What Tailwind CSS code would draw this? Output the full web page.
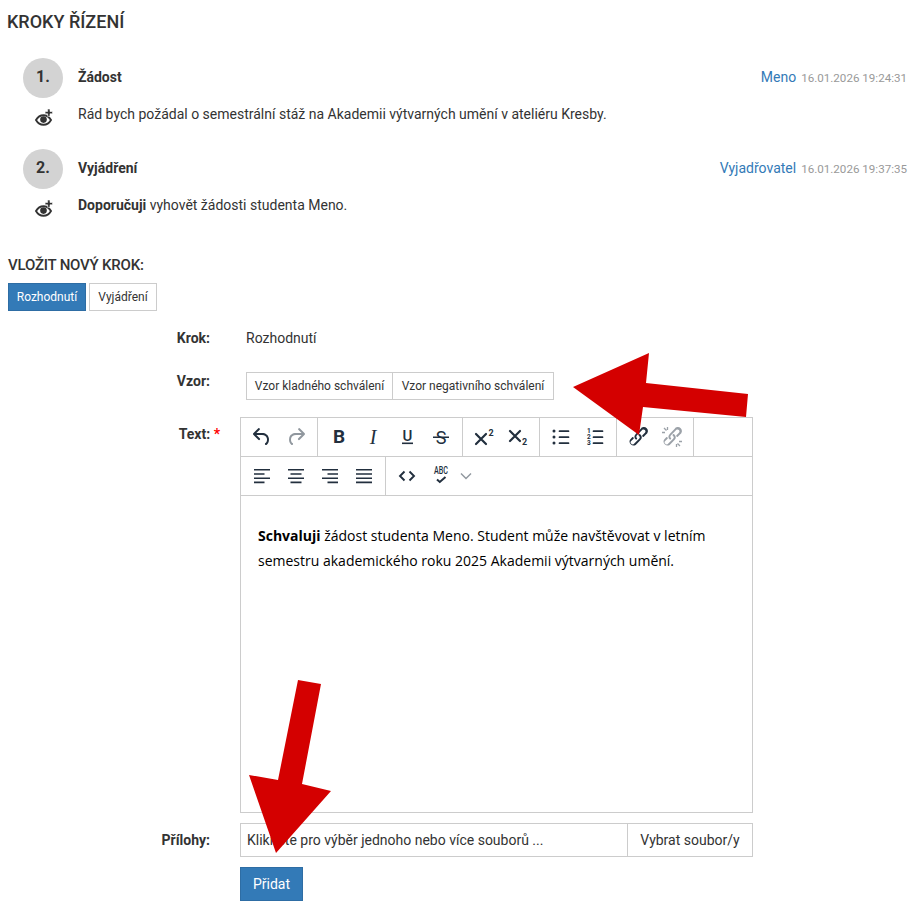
<!DOCTYPE html>
<html lang="cs"><head><meta charset="utf-8"><script src="https://cdn.jsdelivr.net/npm/@tailwindcss/browser@4"></script></head>
<body class="bg-white">
<div class="relative w-[914px] h-[914px] overflow-hidden font-['Roboto',sans-serif] text-[14px] leading-[20px] text-[#333]">
  <div class="pl-[8px] pr-[7px]">
    <h2 class="pt-[11px] -ml-[1px] h-[58px] text-[18px] leading-[22px] font-medium text-[#333]">KROKY ŘÍZENÍ</h2>

    <div class="pl-[15px] h-[91px]">
      <div class="flex items-center h-[40px] pb-[2px]">
        <div class="w-[40px] h-[40px] rounded-full bg-[#d3d3d3] flex items-center justify-center font-bold text-[16px] pb-[2px] mt-[2px]">1.</div>
        <div class="ml-[15px] font-bold">Žádost</div>
        <div class="ml-auto flex items-baseline gap-[5px]"><a class="text-[#337ab7]">Meno</a><span class="text-[11.6px] text-[#999]">16.01.2026 19:24:31</span></div>
      </div>
      <div class="flex h-[30px] pt-[6px]">
        <div class="w-[40px] flex justify-center pt-[5px]"><svg class="w-[19px] h-[17px]" viewBox="0 0 19 17"><path d="M2 11C4 7.500 6.300 6.200 9.500 6.200S15 7.500 17 11c-2 3.500-4.300 4.800-7.500 4.800S4 14.500 2 11z" fill="#fff" stroke="#333" stroke-width="1.900"/><circle cx="9.500" cy="10.600" r="3.300" fill="#333"/><path d="M13.600 0h2.400v2.500h2.500v2.300H16v2.500h-2.400V4.800h-2.500V2.500h2.500z" fill="#333" stroke="#fff" stroke-width=".6"/></svg></div>
        <p class="ml-[15px]">Rád bych požádal o semestrální stáž na Akademii výtvarných umění v ateliéru Kresby.</p>
      </div>
    </div>

    <div class="pl-[15px] h-[106px]">
      <div class="flex items-center h-[40px] pb-[2px]">
        <div class="w-[40px] h-[40px] rounded-full bg-[#d3d3d3] flex items-center justify-center font-bold text-[16px] pb-[2px] mt-[2px]">2.</div>
        <div class="ml-[15px] font-bold">Vyjádření</div>
        <div class="ml-auto flex items-baseline gap-[5px]"><a class="text-[#337ab7]">Vyjadřovatel</a><span class="text-[11.6px] text-[#999]">16.01.2026 19:37:35</span></div>
      </div>
      <div class="flex h-[30px] pt-[6px]">
        <div class="w-[40px] flex justify-center pt-[5px]"><svg class="w-[19px] h-[17px]" viewBox="0 0 19 17"><path d="M2 11C4 7.500 6.300 6.200 9.500 6.200S15 7.500 17 11c-2 3.500-4.300 4.800-7.500 4.800S4 14.500 2 11z" fill="#fff" stroke="#333" stroke-width="1.900"/><circle cx="9.500" cy="10.600" r="3.300" fill="#333"/><path d="M13.600 0h2.400v2.500h2.500v2.300H16v2.500h-2.400V4.800h-2.500V2.500h2.500z" fill="#333" stroke="#fff" stroke-width=".6"/></svg></div>
        <p class="ml-[15px]"><b>Doporučuji</b> vyhovět žádosti studenta Meno.</p>
      </div>
    </div>

    <h3 class="h-[28px] text-[15px] leading-[20px] font-medium tracking-[-0.2px]">VLOŽIT NOVÝ KROK:</h3>
    <div class="flex gap-[3px] h-[28px] text-[12px]">
      <button class="w-[78px] h-[28px] bg-[#337ab7] border border-[#2e6da4] text-white">Rozhodnutí</button>
      <button class="w-[68px] h-[28px] bg-white border border-[#ccc]">Vyjádření</button>
    </div>

    <div class="mt-[17px] flex h-[20px] items-center">
      <div class="w-[202px] text-right font-bold">Krok:</div>
      <div class="ml-[36px]">Rozhodnutí</div>
    </div>

    <div class="mt-[24px] flex h-[28px]">
      <div class="w-[202px] text-right font-bold leading-[18px]">Vzor:</div>
      <div class="ml-[36px] flex text-[12px]">
        <button class="w-[147px] h-[28px] border border-[#ccc] bg-white">Vzor kladného schválení</button>
        <button class="w-[161px] h-[28px] border border-[#ccc] border-l-0 bg-white">Vzor negativního schválení</button>
      </div>
    </div>

    <div class="mt-[17px] flex">
      <div class="w-[202px] text-right font-bold leading-[20px] pt-[7px]"><span class="relative left-[10px]">Text: <span class="text-[#f00]">*</span></span></div>
      <div class="ml-[30px] w-[513px] h-[396px] border border-[#ccc] flex flex-col">
        <div class="flex h-[39px] border-b border-[#ccc] text-[#222f3e]">
          <div class="flex w-[77px] border-r border-[#ccc] pl-[4px] items-center">
            <span class="w-[34px] flex justify-center"><svg class="w-[24px] h-[24px]" viewBox="0 0 24 24" fill="#222f3e"><path d="M6.400 8H12c3.700 0 6.200 2 6.800 5.100.6 2.700-.4 5.600-2.300 6.800a1 1 0 0 1-1-1.800c1.100-.6 1.800-2.700 1.400-4.600-.5-2.100-2.100-3.500-4.900-3.500H6.400l3.300 3.300a1 1 0 1 1-1.400 1.400l-5-5a1 1 0 0 1 0-1.400l5-5a1 1 0 0 1 1.400 1.400L6.400 8z"/></svg></span>
            <span class="w-[34px] flex justify-center"><svg class="w-[24px] h-[24px]" viewBox="0 0 24 24" fill="#222f3e" fill-opacity=".5"><path d="M17.600 8H12c-3.700 0-6.200 2-6.800 5.100-.6 2.700.4 5.600 2.300 6.800a1 1 0 0 0 1-1.800c-1.100-.6-1.800-2.700-1.400-4.600.5-2.100 2.100-3.500 4.900-3.500h5.600l-3.300 3.300a1 1 0 1 0 1.400 1.400l5-5a1 1 0 0 0 0-1.400l-5-5a1 1 0 0 0-1.400 1.400L17.600 8z"/></svg></span>
          </div>
          <div class="flex w-[145px] border-r border-[#ccc] pl-[4px] items-center">
            <span class="w-[34px] text-center font-bold text-[19px] leading-[24px]">B</span>
            <span class="w-[34px] text-center italic font-['Liberation_Serif',serif] text-[20px] leading-[24px]">I</span>
            <span class="w-[34px] flex justify-center"><svg class="w-[24px] h-[24px]" viewBox="0 0 24 24" fill="#222f3e"><text x="12.500" y="15.500" text-anchor="middle" font-size="15" font-weight="500" font-family="Roboto">U</text><rect x="7" y="17.500" width="11" height="1.600"/></svg></span>
            <span class="w-[34px] flex justify-center"><svg class="w-[24px] h-[24px]" viewBox="0 0 24 24" fill="#222f3e"><text x="12" y="18.500" text-anchor="middle" font-size="18" font-family="Roboto">S</text><rect x="4" y="11.500" width="16" height="1.500"/></svg></span>
          </div>
          <div class="flex w-[77px] border-r border-[#ccc] pl-[4px] items-center">
            <span class="w-[34px] flex justify-center"><svg class="w-[24px] h-[24px]" viewBox="0 0 24 24" fill="#222f3e"><path d="M4 9l10 10M14 9L4 19" stroke="#222f3e" stroke-width="2.200" stroke-linecap="round" fill="none"/><text x="16.500" y="11" font-size="9" font-weight="700" font-family="Roboto">2</text></svg></span>
            <span class="w-[34px] flex justify-center"><svg class="w-[24px] h-[24px]" viewBox="0 0 24 24" fill="#222f3e"><path d="M4 6l10 10M14 6L4 16" stroke="#222f3e" stroke-width="2.200" stroke-linecap="round" fill="none"/><text x="16" y="19.500" font-size="9" font-weight="700" font-family="Roboto">2</text></svg></span>
          </div>
          <div class="flex w-[77px] border-r border-[#ccc] pl-[4px] items-center">
            <span class="w-[34px] flex justify-center"><svg class="w-[24px] h-[24px]" viewBox="0 0 24 24" fill="#222f3e"><path d="M10.500 5.300h9a.8.800 0 0 1 0 1.700h-9a.8.800 0 0 1 0-1.700zm0 6h9a.8.800 0 0 1 0 1.700h-9a.8.800 0 0 1 0-1.700zm0 6h9a.8.800 0 0 1 0 1.700h-9a.8.800 0 0 1 0-1.700z"/><circle cx="5" cy="6" r="1.500"/><circle cx="5" cy="12" r="1.500"/><circle cx="5" cy="18" r="1.500"/></svg></span>
            <span class="w-[34px] flex justify-center"><svg class="w-[24px] h-[24px]" viewBox="0 0 24 24" fill="#222f3e"><path d="M10.500 5.300h9a.8.800 0 0 1 0 1.700h-9a.8.800 0 0 1 0-1.700zm0 6h9a.8.800 0 0 1 0 1.700h-9a.8.800 0 0 1 0-1.700zm0 6h9a.8.800 0 0 1 0 1.700h-9a.8.800 0 0 1 0-1.700z"/><text x="4" y="8" font-size="6.500" font-weight="700" font-family="Roboto">1</text><text x="4" y="14" font-size="6.500" font-weight="700" font-family="Roboto">2</text><text x="4" y="20" font-size="6.500" font-weight="700" font-family="Roboto">3</text></svg></span>
          </div>
          <div class="flex w-[77px] border-r border-[#ccc] pl-[4px] items-center">
            <span class="w-[34px] flex justify-center"><svg class="w-[24px] h-[24px]" viewBox="0 0 24 24" fill="#222f3e"><path d="M6.200 12.300a1 1 0 0 1 1.400 1.400l-2.100 2a2 2 0 1 0 2.800 2.800l4.800-4.800a2 2 0 0 0 0-2.800 1 1 0 1 1 1.400-1.300 4 4 0 0 1 0 5.500l-4.800 4.800a4 4 0 0 1-5.500-5.500l2-2.100zm11.600-.6a1 1 0 0 1-1.400-1.400l2-2a2 2 0 1 0-2.700-2.700L11 10.300a2 2 0 0 0 0 2.800 1 1 0 0 1-1.300 1.400 4 4 0 0 1 0-5.500L14.500 4a4 4 0 1 1 5.500 5.500l-2.200 2.200z"/></svg></span>
            <span class="w-[34px] flex justify-center"><svg class="w-[24px] h-[24px]" viewBox="0 0 24 24" fill="#222f3e" fill-opacity=".45"><path d="M6.200 12.300a1 1 0 0 1 1.400 1.400l-2.100 2a2 2 0 1 0 2.800 2.800l4.800-4.800a2 2 0 0 0 0-2.800 1 1 0 1 1 1.400-1.300 4 4 0 0 1 0 5.500l-4.800 4.800a4 4 0 0 1-5.500-5.500l2-2.100zm11.600-.6a1 1 0 0 1-1.400-1.400l2-2a2 2 0 1 0-2.700-2.700L11 10.300a2 2 0 0 0 0 2.800 1 1 0 0 1-1.300 1.400 4 4 0 0 1 0-5.500L14.500 4a4 4 0 1 1 5.500 5.500l-2.200 2.200z"/><path d="M4 3l2.500 2.500M2 7.500h3M7.500 2v3M17.500 18.500L20 21M16.500 22v-3M22 16.500h-3" stroke="#222f3e" stroke-opacity=".45" stroke-width="1.300" fill="none"/></svg></span>
          </div>
        </div>
        <div class="flex h-[39px] border-b border-[#ccc]">
          <div class="flex w-[145px] border-r border-[#ccc] pl-[4px] items-center">
            <span class="w-[34px] flex justify-center"><svg class="w-[24px] h-[24px]" viewBox="0 0 24 24" fill="#222f3e"><path d="M4 5h16v1.600H4zM4 9.200h10.500v1.600H4zM4 13.400h16V15H4zM4 17.600h10.500v1.600H4z"/></svg></span>
            <span class="w-[34px] flex justify-center"><svg class="w-[24px] h-[24px]" viewBox="0 0 24 24" fill="#222f3e"><path d="M4 5h16v1.600H4zM6.500 9.200h11v1.600h-11zM4 13.400h16V15H4zM6.500 17.600h11v1.600h-11z"/></svg></span>
            <span class="w-[34px] flex justify-center"><svg class="w-[24px] h-[24px]" viewBox="0 0 24 24" fill="#222f3e"><path d="M4 5h16v1.600H4zM9.500 9.200H20v1.600H9.500zM4 13.400h16V15H4zM9.500 17.600H20v1.600H9.500z"/></svg></span>
            <span class="w-[34px] flex justify-center"><svg class="w-[24px] h-[24px]" viewBox="0 0 24 24" fill="#222f3e"><path d="M4 5h16v1.600H4zM4 9.200h16v1.600H4zM4 13.400h16V15H4zM4 17.600h16v1.600H4z"/></svg></span>
          </div>
          <div class="flex pl-[4px] items-center">
            <span class="w-[34px] flex justify-center"><svg class="w-[24px] h-[24px]" viewBox="0 0 24 24" fill="none" stroke="#222f3e" stroke-width="1.900"><path d="M9.500 7.500L5 12l4.500 4.500M14.500 7.500L19 12l-4.500 4.500"/></svg></span>
            <span class="w-[34px] flex justify-center"><svg class="w-[24px] h-[24px]" viewBox="0 0 24 24"><text x="5" y="9.500" textLength="14" lengthAdjust="spacingAndGlyphs" font-size="10" font-family="Roboto" fill="#222f3e" font-weight="500">ABC</text><path d="M8 15.500l2.800 2.500L16.500 13" fill="none" stroke="#222f3e" stroke-width="2"/></svg></span>
            <span class="w-[16px] flex justify-center"><svg class="w-[12px] h-[12px]" viewBox="0 0 12 12" fill="none" stroke="#222f3e" stroke-opacity=".5" stroke-width="1.400"><path d="M1 3.500l5 5 5-5"/></svg></span>
          </div>
        </div>
        <div class="px-[17px] pt-[27px] font-['Open_Sans',sans-serif] text-[14px] leading-[25px] text-black">
          <p><b>Schvaluji</b> žádost studenta Meno. Student může navštěvovat v letním semestru akademického roku 2025 Akademii výtvarných umění.</p>
        </div>
      </div>
    </div>

    <div class="mt-[10px] flex">
      <div class="w-[202px] text-right font-bold leading-[34px]">Přílohy:</div>
      <div class="ml-[30px] w-[513px] h-[34px] border border-[#ccc] flex items-center">
        <div class="flex-1 pl-[6px]">Klikněte pro výběr jednoho nebo více souborů ...</div>
        <div class="w-[125px] h-full border-l border-[#ccc] flex items-center justify-center">Vybrat soubor/y</div>
      </div>
    </div>
    <div class="mt-[10px] ml-[232px]">
      <button class="w-[63px] h-[34px] bg-[#337ab7] border border-[#2e6da4] text-white">Přidat</button>
    </div>
  </div>

  <svg class="absolute left-0 top-0 w-[914px] h-[914px] pointer-events-none" viewBox="0 0 914 914" fill="#d40000">
    <polygon points="573,387 649,353 646,383 748,394 746,417 643,407 639,435"/>
    <polygon points="298,680 321,684 302,784 331,791 276,853 249,775 278,780"/>
  </svg>
</div>
</body></html>
